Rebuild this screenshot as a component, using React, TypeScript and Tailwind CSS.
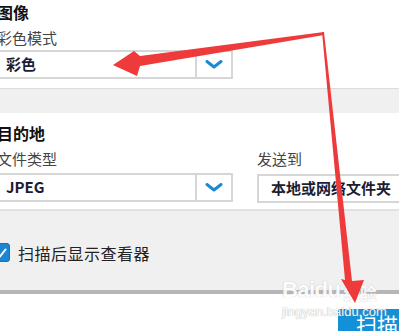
import React from 'react';

const FONT = { fontFamily: '"Microsoft YaHei", "Noto Sans CJK SC", "Noto Sans", sans-serif' };

function Chevron() {
  return (
    <svg width="18" height="9" viewBox="0 0 18 9" fill="none">
      <path d="M2 1.5 L9 7 L16 1.5" stroke="#1a8ad4" strokeWidth="3" strokeLinecap="round" strokeLinejoin="round" />
    </svg>
  );
}

function Combo({ value, arrow = true, className = '', pad = 'pl-[9px]' }: { value: string; arrow?: boolean; className?: string; pad?: string }) {
  return (
    <div className={`flex h-[29px] border-2 border-[#d6d6d6] bg-white ${className}`}>
      <div className={`flex flex-1 items-center whitespace-nowrap text-[15px] font-bold text-[#1c1c34] ${pad}`}>{value}</div>
      {arrow && (
        <div className="flex w-[36px] items-center justify-center border-l-2 border-[#d6d6d6]">
          <Chevron />
        </div>
      )}
    </div>
  );
}

export default function App() {
  return (
    <div className="relative h-[331px] w-[399px] overflow-hidden bg-white text-[#333]" style={FONT}>
      {/* 图像 */}
      <section className="h-[89px] border-b border-[#dcdcdc] bg-white">
        <div className="ml-[-5px] w-[238px] pt-[2px]">
          <h2 className="pl-[2px] text-[16px] font-bold leading-[20px] text-[#111]">图像</h2>
          <div className="mt-[6px] pl-[2px] text-[15px] leading-[20px] text-[#444]">彩色模式</div>
          <Combo value="彩色" className="mt-[2px]" />
        </div>
      </section>

      <div className="h-[24px] bg-[#f0f0f0]" />

      {/* 目的地 */}
      <section className="h-[98px] border-b-2 border-[#e2e2e2] bg-white">
        <div className="ml-[-5px] flex gap-[24px] pt-[10px]">
          <div className="w-[238px] shrink-0">
            <h2 className="pl-[2px] text-[16px] font-bold leading-[20px] text-[#111]">目的地</h2>
            <div className="mt-[6px] pl-[2px] text-[15px] leading-[20px] text-[#444]">文件类型</div>
            <Combo value="JPEG" className="mt-[4px]" />
          </div>
          <div className="w-[160px] shrink-0 pt-[26px]">
            <div className="text-[15px] leading-[20px] text-[#444]">发送到</div>
            <Combo value="本地或网络文件夹" arrow={false} pad="pl-[12px]" className="mt-[5px] border-r-0" />
          </div>
        </div>
      </section>

      {/* 选项 */}
      <section className="flex h-[79px] items-center bg-[#f0f0f0]">
        <div className="ml-[-8px] flex items-center gap-[8px] pt-[4px]">
          <span className="flex h-[19px] w-[18px] items-center justify-center rounded-[3px] border border-[#1571b8] bg-[#1d86d2]">
            <svg width="12" height="12" viewBox="0 0 12 12" fill="none">
              <path d="M2 6.5 L5 9.5 L10.5 2.5" stroke="white" strokeWidth="2" strokeLinecap="round" strokeLinejoin="round" />
            </svg>
          </span>
          <span className="text-[16px] tracking-[0.5px] text-[#222]">扫描后显示查看器</span>
        </div>
      </section>

      <div className="h-[4px] bg-[#b6b6b6]" />

      {/* 底部 */}
      <footer className="flex h-[38px] justify-end bg-white pt-[15px]">
        <button className="h-[30px] w-[61px] bg-[#1390d8] pl-[18px] text-left text-[21px] leading-[30px] text-white">
          扫描
        </button>
      </footer>

      {/* 水印 */}
      <div className="pointer-events-none absolute left-[282px] top-[279px] leading-none text-white opacity-90">
        <div className="flex items-end text-[22px] font-bold tracking-tight [text-shadow:0_0_1px_#aaa]" style={{ fontFamily: '"Liberation Sans", sans-serif' }}>
          Baidu<span className="ml-[3px] text-[17px]" style={FONT}>经验</span>
        </div>
        <div className="mt-[4px] text-[13px] [text-shadow:0_0_1px_#888]" style={{ fontFamily: '"Liberation Sans", sans-serif' }}>jingyan.baidu.com</div>
      </div>

      {/* 标注箭头 */}
      <svg className="pointer-events-none absolute left-0 top-0" width="399" height="331" viewBox="0 0 399 331">
        <polygon points="324,32 140,56 134,51 113,65 137,76 140,66 324,35" fill="#ee3a3a" />
        <polygon points="322,32 345,280 341,279 355,303 364,280 352,281 324,32" fill="#ee3a3a" />
      </svg>
    </div>
  );
}
